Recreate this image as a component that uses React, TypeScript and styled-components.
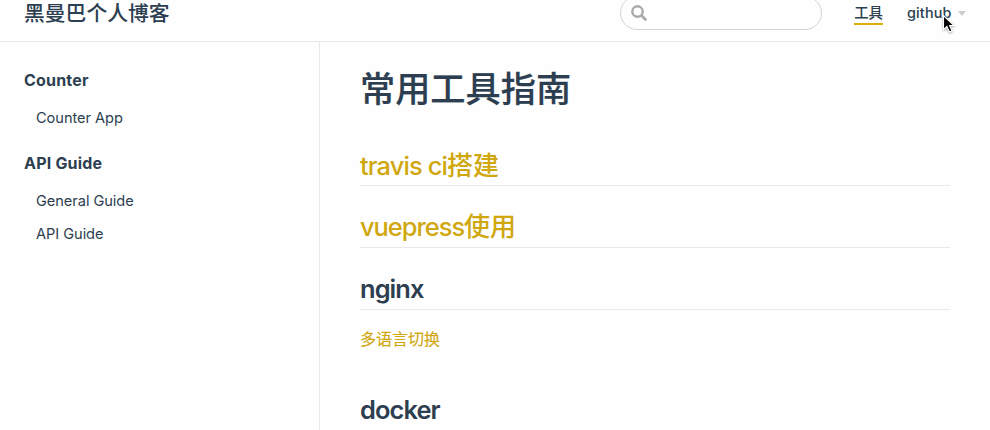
import React from "react";
import styled, { createGlobalStyle } from "styled-components";

const GlobalStyle = createGlobalStyle`
  * { box-sizing: border-box; }
  body {
    margin: 0;
    overflow: hidden;
    background: #fefefe;
    color: #2c3e50;
    font-family: Inter, "Noto Sans CJK SC", sans-serif;
    font-size: 16px;
    -webkit-font-smoothing: antialiased;
  }
  a { color: inherit; text-decoration: none; }
`;

const Page = styled.div`
  position: relative;
  display: flex;
  flex-direction: column;
  height: 430px;
  overflow: hidden;
`;

const Navbar = styled.header`
  display: flex;
  flex: none;
  height: 42px;
  padding-left: 24px;
  border-bottom: 1px solid #e8e9ea;
`;

const SiteName = styled.a`
  height: 28px;
  margin-right: auto;
  font-size: 20.8px;
  font-weight: 500;
  line-height: 27px;
`;

const SearchBox = styled.div`
  display: flex;
  width: 202px;
  height: 34px;
  margin: -4px 32px 0 0;
  padding: 8px 0 0 10px;
  border: 1px solid #cfd4db;
  border-radius: 17px;
`;

const NavLink = styled.a<{ $active?: boolean }>`
  display: flex;
  align-items: center;
  height: 25px;
  padding-top: ${(p) => (p.$active ? 2 : 0)}px;
  font-size: 14.4px;
  font-weight: 500;
  line-height: 27px;
  white-space: nowrap;
  border-bottom: 2px solid ${(p) => (p.$active ? "#dcae0a" : "transparent")};
`;

const Menu = styled(NavLink)`
  width: 83px;
  height: 27px;
  margin-left: 24px;
  letter-spacing: 0.15px;
`;

const Caret = styled.span`
  margin: 2px 0 0 6px;
  border: 4px solid transparent;
  border-top: 5px solid #ccc;
  border-bottom: 0;
`;

const Body = styled.div`
  display: flex;
  flex: 1;
  min-height: 0;
`;

const Sidebar = styled.aside`
  width: 320px;
  padding-top: 24px;
  border-right: 1px solid #e8e9ea;
`;

const Group = styled.section`
  margin-bottom: 15px;
`;

const GroupTitle = styled.p`
  height: 30px;
  margin: 0 0 5px;
  padding-left: 24px;
  font-size: 16px;
  font-weight: 700;
  line-height: 29px;
  letter-spacing: 0.2px;
`;

const SidebarLink = styled.a`
  display: block;
  height: 33px;
  padding-left: 36px;
  font-size: 14.6px;
  line-height: 35px;
  letter-spacing: -0.05px;
`;

const Content = styled.main`
  flex: 1;
  min-width: 0;
  padding: 25px 40px 0;
`;

const PageTitle = styled.h1`
  height: 44px;
  margin: 0 0 36px;
  font-size: 35.2px;
  font-weight: 500;
  line-height: 44px;
  -webkit-text-stroke: 0.2px #2c3e50;
`;

const Heading = styled.h2<{ $accent?: boolean; $spacing: number }>`
  display: flex;
  height: 39px;
  margin: 0 0 23px;
  border-bottom: 1px solid #e8e9ea;
  color: ${(p) => (p.$accent ? "#d0a70f" : "#2c3e50")};
  font-size: 25.4px;
  font-weight: ${(p) => (p.$accent ? 500 : 600)};
  line-height: 36px;
  letter-spacing: ${(p) => p.$spacing}px;
  white-space: nowrap;

  &:first-of-type {
    line-height: 38px;
  }
`;

const Cjk = styled.span`
  letter-spacing: 0;
  font-size: 26px;
`;

const TextLink = styled.a`
  display: block;
  height: 28px;
  margin: -8px 0 39px;
  color: #d0a70f;
  font-size: 16px;
  font-weight: 400;
  line-height: 28px;
  -webkit-text-stroke: 0.15px #d0a70f;
`;

const Cursor = styled.svg`
  position: absolute;
  left: 942px;
  top: 14px;
  filter: drop-shadow(0 1px 1px rgba(0, 0, 0, 0.35));
`;

export default function App() {
  return (
    <>
      <GlobalStyle />
      <Page>
        <Navbar>
          <SiteName>黑曼巴个人博客</SiteName>
          <SearchBox>
            <svg width="17" height="17" viewBox="0 0 17 17" fill="none" stroke="#aaa">
              <circle cx="6.5" cy="6.5" r="5.2" strokeWidth="2.4" />
              <path d="M10.2 10.2 15.2 15.2" strokeWidth="2.7" />
            </svg>
          </SearchBox>
          <NavLink $active>工具</NavLink>
          <Menu>
            github
            <Caret />
          </Menu>
        </Navbar>
        <Body>
          <Sidebar>
            <Group>
              <GroupTitle>Counter</GroupTitle>
              <SidebarLink>Counter App</SidebarLink>
            </Group>
            <Group>
              <GroupTitle>API Guide</GroupTitle>
              <SidebarLink>General Guide</SidebarLink>
              <SidebarLink>API Guide</SidebarLink>
            </Group>
          </Sidebar>
          <Content>
            <PageTitle>常用工具指南</PageTitle>
            <Heading $accent $spacing={-0.88}>
              travis ci<Cjk>搭建</Cjk>
            </Heading>
            <Heading $accent $spacing={-1}>
              vuepress<Cjk>使用</Cjk>
            </Heading>
            <Heading $spacing={-0.9}>nginx</Heading>
            <TextLink>多语言切换</TextLink>
            <Heading $spacing={-0.9}>docker</Heading>
          </Content>
        </Body>
        <Cursor width="15" height="21" viewBox="0 0 15 21">
          <path
            d="M1.5 1.5V15.6L4.9 12.5 7.4 18 10 16.8 7.6 11.5H12Z"
            fill="#000"
            stroke="#fff"
            strokeWidth="1.1"
          />
        </Cursor>
      </Page>
    </>
  );
}
